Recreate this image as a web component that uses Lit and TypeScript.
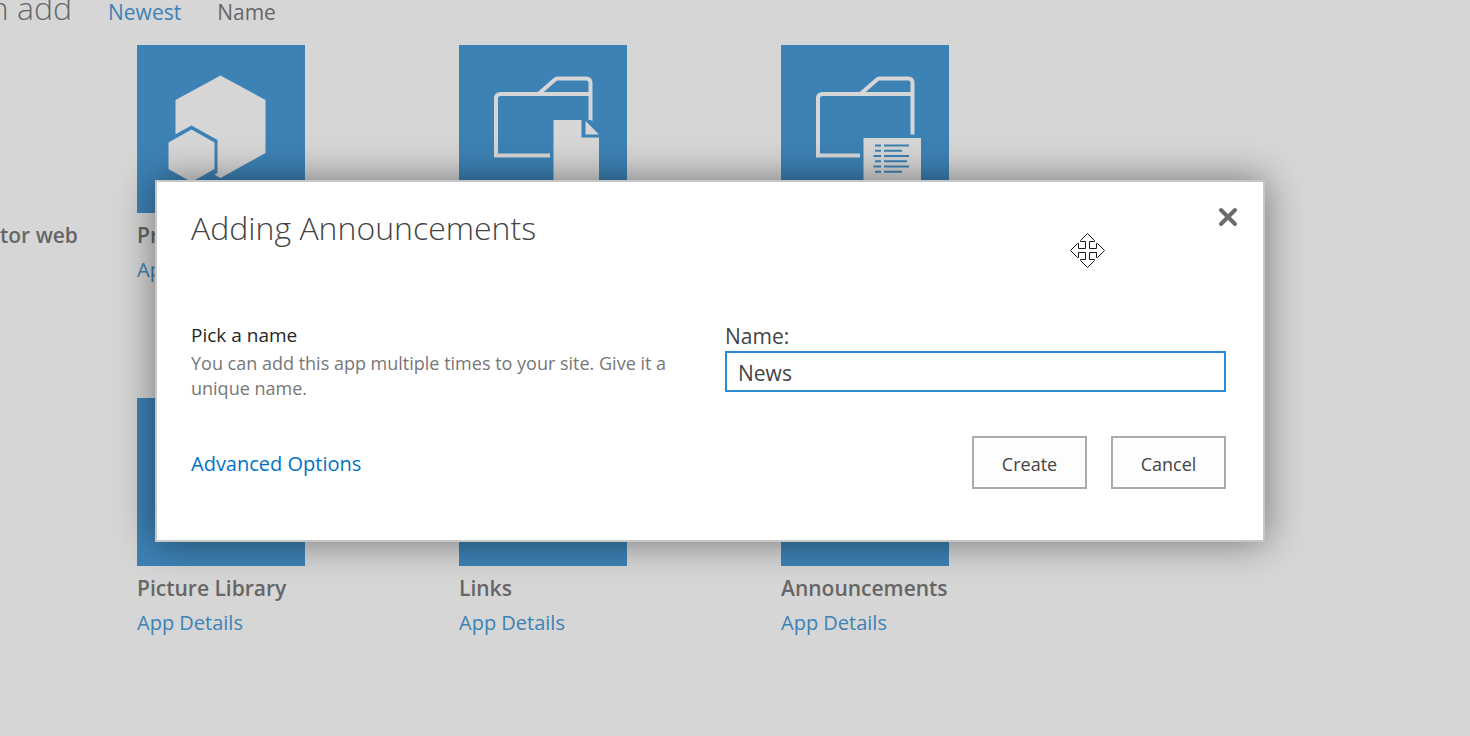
import { LitElement, html, css, svg, nothing } from "lit";
import { customElement, property, state } from "lit/decorators.js";

type Art = "product" | "documents" | "list" | "none";

const art: Record<Art, unknown> = {
  product: svg`
    <path class="solid" d="M83.500 30.500 128.500 55v53L83.500 133 38.500 108V55Z" />
    <path class="gap" d="M54.500 80.500 80.500 95v33L54.500 143 28 128V95Z" />
    <path class="solid" d="M54.500 84.500 77.500 97.500v26.500L54.500 137 31.500 124V97.500Z" />`,
  documents: svg`
    <path class="line" d="M91 110.500H37V53.500q0-4.500 4.500-4.500H131M80 48.500 95.500 35q1.500-1.500 3-1.500H127q4.500 0 4.500 4.500V76" />
    <path class="gap" d="M125 75h7l10 11v8h-17z" />
    <path class="solid" d="M94.500 75h28v17.500h17.500V137H94.500Z" />
    <path class="solid" d="M126.500 76 140 89.500H126.500Z" />`,
  list: svg`
    <path class="line" d="M79 110.500H37V53.500q0-4.500 4.500-4.500H131M80 48.500 95.500 35q1.500-1.500 3-1.500H127q4.500 0 4.500 4.500V89.500" />
    <path class="solid" d="M82.500 93h57.500v44H82.500Z" />
    <path class="rows" d="M94 100.500h6M103 100.500h25M94 105.700h6M103 105.700h18M92.500 111h7.500M103 111h25M94 116.200h6M103 116.200h23M92.500 121.500h7.500M103 121.500h25M94 126.700h6M103 126.700h18" />`,
  none: svg``,
};

@customElement("app-tile")
class AppTile extends LitElement {
  @property() name = "";
  @property() art: Art = "none";

  static styles = css`
    :host { display: block; }
    .tile { display: block; width: 168px; height: 168px; background: #3d82b5; }
    .solid { fill: #d6d6d6; }
    .gap { fill: #3d82b5; }
    .line { fill: none; stroke: #d6d6d6; stroke-width: 4; }
    .rows { fill: none; stroke: #3d82b5; stroke-width: 2; }
    .name {
      margin: 7px 0 5px;
      font-size: 21px;
      line-height: 30px;
      font-weight: 600;
      color: #666;
    }
    .details { font-size: 20px; line-height: 30px; color: #3d82b5; text-decoration: none; }
  `;

  render() {
    return html`
      <svg class="tile" viewBox="0 0 168 168" aria-hidden="true">${art[this.art]}</svg>
      ${this.name
        ? html`<h2 class="name">${this.name}</h2>
            <a class="details" href="#">App Details</a>`
        : nothing}
    `;
  }
}

@customElement("add-app-dialog")
class AddAppDialog extends LitElement {
  @state() private name = "News";

  static styles = css`
    :host { display: block; }
    .dialog {
      position: relative;
      box-sizing: border-box;
      padding: 22px 37px 51px 34px;
      background: #fff;
      border: 2px solid #c6c6c6;
      box-shadow: 0 0 36px rgba(0, 0, 0, 0.47);
      color: #444;
    }
    .head { display: flex; justify-content: space-between; align-items: flex-start; }
    .title { margin: 0; font-size: 32px; line-height: 48px; font-weight: 300; }
    .close {
      display: grid;
      place-items: center;
      width: 24px;
      height: 26px;
      margin-right: -14px;
      padding: 0;
      border: 0;
      background: none;
    }
    .form { display: grid; grid-template-columns: minmax(0, 1fr) 501px; margin-top: 70px; }
    .hint { padding-right: 50px; }
    .pick { margin: 0; font-size: 19px; line-height: 27px; font-weight: 400; color: #262626; }
    .text { margin: 2px 0 0; font-size: 18px; line-height: 25px; color: #777; }
    .label { display: block; font-size: 21px; line-height: 28px; }
    .input {
      display: block;
      box-sizing: border-box;
      width: 100%;
      height: 41px;
      margin-top: 1px;
      padding: 2px 11px 0;
      border: 2px solid #2a8dd4;
      border-radius: 0;
      outline: none;
      background: #fff;
      font: inherit;
      font-size: 21px;
      color: #444;
    }
    .foot { display: flex; justify-content: space-between; align-items: center; margin-top: 35px; }
    .advanced { padding-top: 3px; font-size: 20px; line-height: 30px; color: #0072c6; text-decoration: none; }
    .actions { display: flex; gap: 24px; }
    .button {
      width: 115px;
      height: 53px;
      padding: 2px 0 0;
      border: 2px solid #ababab;
      border-radius: 0;
      background: #fdfdfd;
      font: inherit;
      font-size: 18px;
      color: #444;
    }
    .pointer { position: absolute; top: 50px; right: 157px; width: 37px; height: 37px; }
  `;

  render() {
    return html`
      <section class="dialog" role="dialog" aria-labelledby="title">
        <div class="head">
          <h1 class="title" id="title">Adding Announcements</h1>
          <button class="close" aria-label="Close">
            <svg width="20" height="20" viewBox="0 0 20 20">
              <path
                d="M3 3 17 17M17 3 3 17"
                stroke="#6b6b6b" stroke-width="4" stroke-linecap="round"
              />
            </svg>
          </button>
        </div>
        <div class="form">
          <div class="hint">
            <h2 class="pick">Pick a name</h2>
            <p class="text">You can add this app multiple times to your site. Give it a unique name.</p>
          </div>
          <div>
            <label class="label" for="name">Name:</label>
            <input
              class="input"
              id="name"
              type="text"
              .value=${this.name}
              @input=${(e: Event) => (this.name = (e.target as HTMLInputElement).value)}
            />
          </div>
        </div>
        <div class="foot">
          <a class="advanced" href="#">Advanced Options</a>
          <div class="actions">
            <button class="button">Create</button>
            <button class="button">Cancel</button>
          </div>
        </div>
        <svg class="pointer" viewBox="0 0 37 37" aria-hidden="true">
          <path
            d="M18.500 1.500 25.500 8.500V9.500H20.500V16.500H27.500V11.500H28.500L35.500 18.500 28.500 25.500H27.500V20.500H20.500V27.500H25.500V28.500L18.500 35.500 11.500 28.500V27.500H16.500V20.500H9.500V25.500H8.500L1.500 18.500 8.500 11.500H9.500V16.500H16.500V9.500H11.500V8.500Z"
            fill="#fff" stroke="#1a1a1a"
          />
        </svg>
      </section>
    `;
  }
}

@customElement("app-root")
class AppRoot extends LitElement {
  static styles = css`
    :host {
      display: block;
      position: relative;
      min-height: 100vh;
      overflow: hidden;
      background: #d6d6d6;
      color: #666;
      font-family: "Open Sans", "Noto Sans", sans-serif;
    }
    .bar { display: flex; align-items: baseline; height: 45px; font-size: 21px; line-height: 16px; }
    .heading {
      display: flex;
      justify-content: flex-end;
      flex: none;
      width: 72px;
      margin: 0 36px 0 0;
      font-size: 32px;
      font-weight: 300;
      white-space: nowrap;
    }
    .sort { margin-right: 36px; color: #666; text-decoration: none; }
    .active { color: #3d82b5; }
    .apps { display: grid; grid-template-columns: 137px repeat(3, 322px); row-gap: 113px; }
    .partial { margin: 175px 0 0; font-size: 21px; line-height: 30px; font-weight: 600; }
    .overlay { position: absolute; inset: 180px 205px auto 155px; }
  `;

  render() {
    return html`
      <header class="bar">
        <h1 class="heading">n add</h1>
        <a class="sort active" href="#">Newest</a>
        <a class="sort" href="#">Name</a>
      </header>
      <main class="apps">
        <h2 class="partial">tor web</h2>
        <app-tile name="Pr" art="product"></app-tile>
        <app-tile art="documents"></app-tile>
        <app-tile art="list"></app-tile>
        <span></span>
        <app-tile name="Picture Library"></app-tile>
        <app-tile name="Links"></app-tile>
        <app-tile name="Announcements"></app-tile>
      </main>
      <add-app-dialog class="overlay"></add-app-dialog>
    `;
  }
}
